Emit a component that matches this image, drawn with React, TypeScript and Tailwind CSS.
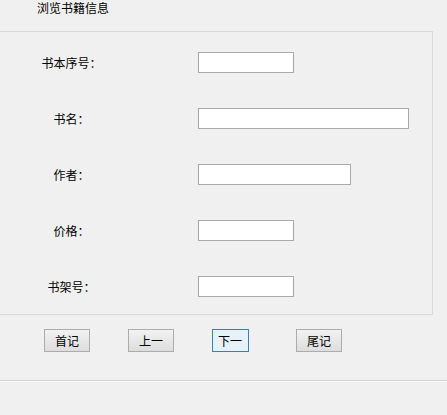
const fields = [
  { label: '书本序号：', width: 'w-[96px]' },
  { label: '书名：', width: 'w-[211px]' },
  { label: '作者：', width: 'w-[153px]' },
  { label: '价格：', width: 'w-[96px]' },
  { label: '书架号：', width: 'w-[96px]' },
];

const buttons = [
  { text: '首记', focused: false },
  { text: '上一', focused: false },
  { text: '下一', focused: true },
  { text: '尾记', focused: false },
];

export default function App() {
  return (
    <div
      className="w-[447px] h-[415px] bg-[#f0f0f0] text-[12px] text-black overflow-hidden"
      style={{ fontFamily: '"Noto Sans CJK SC", "DejaVu Sans", sans-serif' }}
    >
      <div className="h-[31px] pl-[37px] leading-[16px]">浏览书籍信息</div>

      <div className="w-[433px] h-[284px] border-t border-r border-b border-[#d9d9d9] pt-[20px]">
        <div className="flex flex-col gap-[35px]">
          {fields.map((f) => (
            <div key={f.label} className="flex items-center h-[21px]">
              <div className="w-[143px] text-center leading-[21px]">{f.label}</div>
              <div
                className={`ml-[55px] h-[21px] ${f.width} bg-white border border-[#a9a9a9]`}
              />
            </div>
          ))}
        </div>
      </div>

      <div className="grid grid-cols-[84px_84px_84px_84px] pl-[44px] mt-[14px]">
        {buttons.map((b) =>
          b.focused ? (
            <div
              key={b.text}
              className="w-[37px] h-[23px] border border-[#3c7fb1] bg-[#e5f1fb] leading-[21px] pl-[5px]"
            >
              {b.text}
            </div>
          ) : (
            <div
              key={b.text}
              className="w-[46px] h-[23px] border border-[#acacac] bg-gradient-to-b from-[#f2f2f2] to-[#dddddd] text-center leading-[21px]"
            >
              {b.text}
            </div>
          )
        )}
      </div>
      <div className="mt-[28px] h-[1px] bg-[#d4d4d4]" />
      <div className="h-[1px] bg-white" />
    </div>
  );
}
